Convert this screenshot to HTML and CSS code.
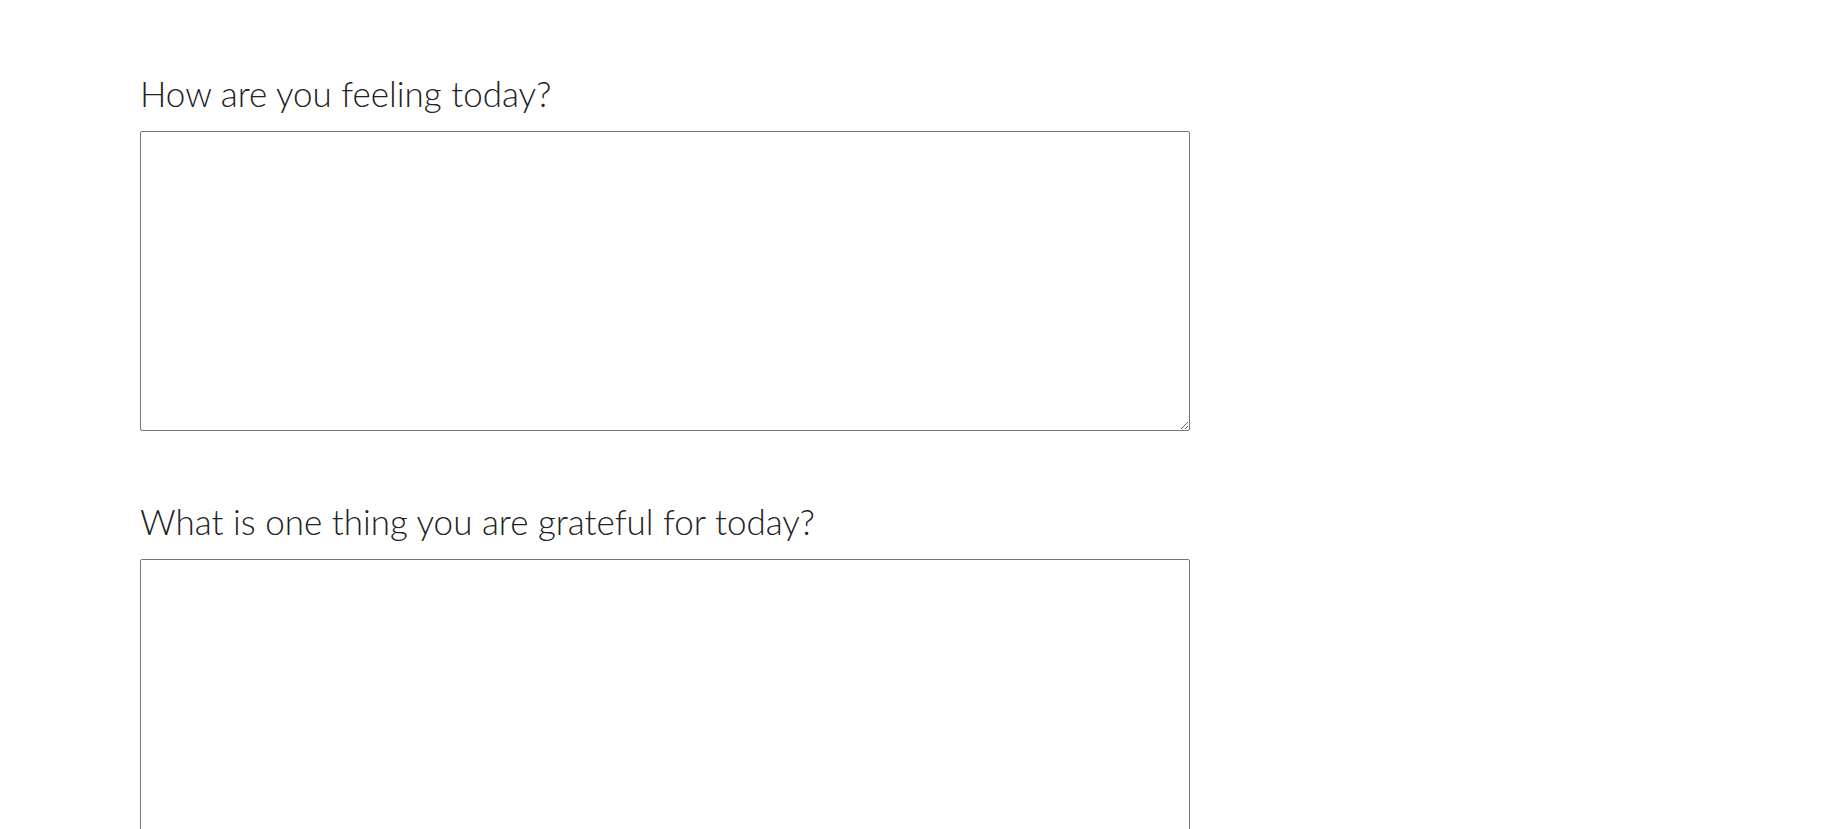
FILE: index.html
```html
<!DOCTYPE html>
<html lang="en">
<head>
<meta charset="utf-8">
<title>Journal</title>
<link rel="stylesheet" href="styles.css">
</head>
<body>
<form class="journal">
  <div class="field">
    <label class="prompt" for="feeling">How are you feeling today?</label>
    <textarea class="entry" id="feeling"></textarea>
  </div>
  <div class="field">
    <label class="prompt" for="grateful">What is one thing you are grateful for today?</label>
    <textarea class="entry" id="grateful"></textarea>
  </div>
</form>
</body>
</html>
```
FILE: styles.css
```css
html, body {
  margin: 0;
  padding: 0;
  background: #fff;
}
body {
  font-family: "Lato Light", Lato, "Open Sans", sans-serif;
  overflow: hidden;
}
.journal {
  display: flex;
  flex-direction: column;
  gap: 69px;
  padding: 72px 0 0 140px;
}
.field {
  display: flex;
  flex-direction: column;
  align-items: flex-start;
}
.prompt {
  font-size: 35px;
  font-weight: 300;
  line-height: 1.2;
  color: #222;
  margin-bottom: 17px;
}
.entry {
  box-sizing: border-box;
  width: 1050px;
  height: 300px;
  border: 1px solid #767676;
  border-radius: 2px;
  padding: 2px;
  margin: 0;
  background: #fff;
}
```
